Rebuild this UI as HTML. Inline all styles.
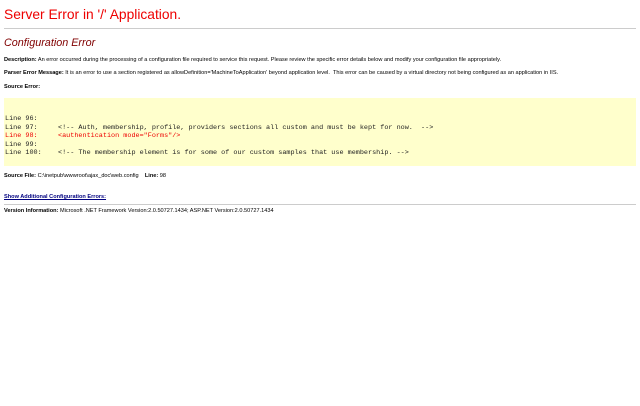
<!DOCTYPE html>
<html><head><style>
body{margin:0;width:640px;height:406px;background:#fff;font-family:"Liberation Sans",Arial,sans-serif;position:relative;overflow:hidden}
.a{position:absolute;white-space:nowrap}
.s{font-size:5.6px;color:#000}
b{font-weight:bold}
pre.a{margin:0;font-family:"Liberation Mono",monospace;font-size:6.8px;line-height:8.5px;white-space:pre;color:#222}
</style></head><body>
<div class="a" style="left:4px;top:7px;font-size:13.8px;color:#e00;">Server Error in '/' Application.</div>
<div class="a" style="left:4px;top:28px;width:632px;height:1px;background:#ccc"></div>
<div class="a" style="left:4px;top:37px;font-size:10.8px;font-style:italic;color:#800000;">Configuration Error</div>
<div class="a s" style="left:4px;top:57px"><b>Description:</b> An error occurred during the processing of a configuration file required to service this request. Please review the specific error details below and modify your configuration file appropriately.</div>
<div class="a s" style="left:4px;top:70px"><b>Parser Error Message:</b> It is an error to use a section registered as allowDefinition='MachineToApplication' beyond application level.&nbsp; This error can be caused by a virtual directory not being configured as an application in IIS.</div>
<div class="a s" style="left:4px;top:84px"><b>Source Error:</b></div>
<div class="a" style="left:4px;top:98px;width:632px;height:68px;background:#ffffcc"></div>
<pre class="a" style="left:5px;top:115px">Line 96:  
Line 97:     &lt;!-- Auth, membership, profile, providers sections all custom and must be kept for now.  --&gt;
<span style="color:#e00">Line 98:     &lt;authentication mode="Forms"/&gt;</span>
Line 99:  
Line 100:    &lt;!-- The membership element is for some of our custom samples that use membership. --&gt;</pre>
<div class="a s" style="left:4px;top:173px"><b>Source File:</b> C:\inetpub\wwwroot\ajax_doc\web.config &nbsp;&nbsp; <b>Line:</b> 98</div>
<div class="a s" style="left:4px;top:194px;color:#000080;text-decoration:underline;font-weight:bold">Show Additional Configuration Errors:</div>
<div class="a" style="left:4px;top:204px;width:632px;height:1px;background:#ccc"></div>
<div class="a s" style="left:4px;top:208px"><b>Version Information:</b> Microsoft .NET Framework Version:2.0.50727.1434; ASP.NET Version:2.0.50727.1434</div>
</body></html>
